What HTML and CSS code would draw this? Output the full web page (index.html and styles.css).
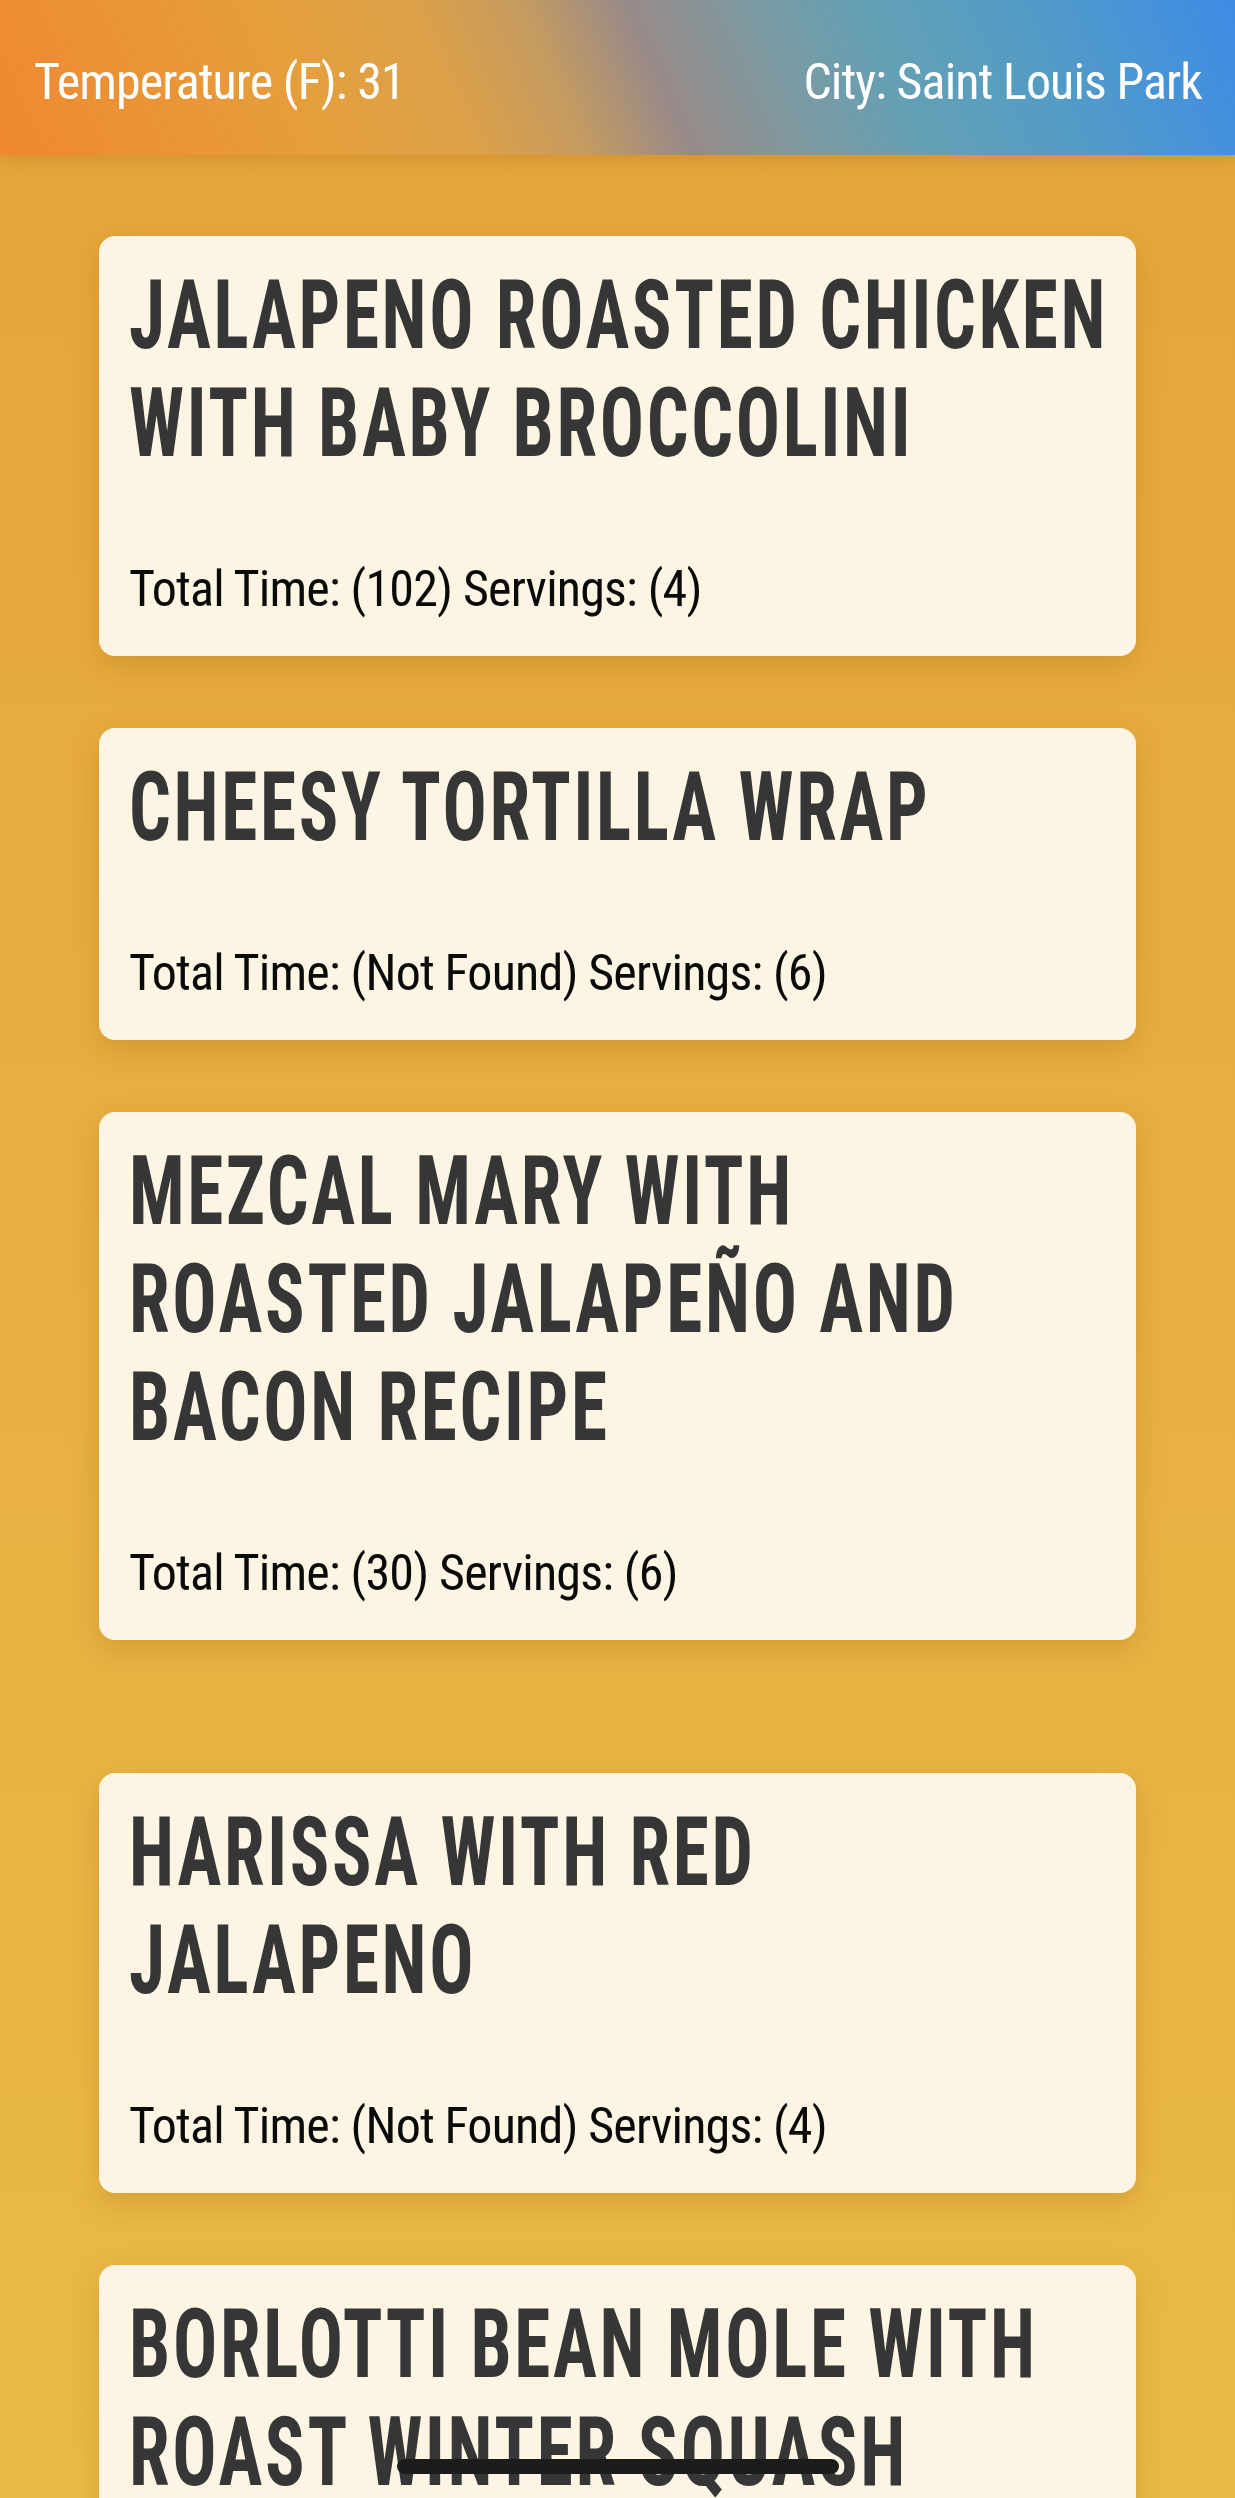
FILE: index.html
```html
<!DOCTYPE html>
<html lang="en">
<head>
<meta charset="utf-8">
<title>Recipes</title>
<link rel="stylesheet" href="styles.css">
</head>
<body>
<header class="topbar">
  <span class="topbar__item topbar__item--left">Temperature (F): 31</span>
  <span class="topbar__item topbar__item--right">City: Saint Louis Park</span>
</header>
<main class="list">
  <article class="card">
    <h2 class="card__title">Jalapeno Roasted Chicken<br>with Baby Broccolini</h2>
    <p class="card__meta">Total Time: (102) Servings: (4)</p>
  </article>
  <article class="card">
    <h2 class="card__title">Cheesy Tortilla Wrap</h2>
    <p class="card__meta">Total Time: (Not Found) Servings: (6)</p>
  </article>
  <article class="card">
    <h2 class="card__title">Mezcal Mary with<br>Roasted Jalapeño and<br>Bacon Recipe</h2>
    <p class="card__meta">Total Time: (30) Servings: (6)</p>
  </article>
  <article class="card card--spaced">
    <h2 class="card__title">Harissa with Red<br>Jalapeno</h2>
    <p class="card__meta">Total Time: (Not Found) Servings: (4)</p>
  </article>
  <article class="card">
    <h2 class="card__title">Borlotti Bean Mole with<br>Roast Winter Squash</h2>
    <p class="card__meta">Total Time: (Not Found) Servings: (4)</p>
  </article>
</main>
<div class="navbar-handle"></div>
</body>
</html>
```
FILE: styles.css
```css
* { box-sizing: border-box; }

html, body {
  margin: 0;
  padding: 0;
}

body {
  min-height: 2498px;
  background: linear-gradient(180deg, #e6a43b 0%, #e8b041 50%, #eabc45 100%);
  font-family: Roboto, "Liberation Sans", sans-serif;
  overflow: hidden;
}

.topbar {
  position: relative;
  z-index: 2;
  height: 155px;
  padding: 8px 33px 0 34px;
  display: flex;
  align-items: center;
  justify-content: space-between;
  background: linear-gradient(66deg, #ef8731 0%, #e59f3d 26%, #dba049 37%, #c59b60 45%, #998a88 53%, #7e99a0 62%, #64a0b4 71%, #539cc6 83%, #3e8be6 100%);
  box-shadow: 0 4px 18px rgba(150, 80, 0, 0.25);
  color: #ffffff;
}

.topbar__item {
  font-size: 50px;
  font-stretch: 75%;
  font-weight: 400;
  line-height: 58px;
  letter-spacing: -0.9px;
  white-space: nowrap;
}

.list {
  display: flex;
  flex-direction: column;
  gap: 72px;
  padding: 81px 99px 0;
}

.card {
  background: #fdf5e3;
  border-radius: 16px;
  padding: 25px 30px 38px;
  box-shadow: 0 10px 28px rgba(140, 80, 0, 0.22);
}

.card--spaced {
  margin-top: 61px;
}

.card__title {
  margin: 0 0 83px;
  font-family: Roboto, "Liberation Sans", sans-serif;
  font-size: 96px;
  font-weight: 700;
  font-stretch: 75%;
  line-height: 108px;
  letter-spacing: 3.5px;
  text-transform: uppercase;
  color: #363636;
  white-space: nowrap;
  transform: scaleX(0.765);
  transform-origin: left center;
}

.card__meta {
  margin: 0;
  font-size: 50px;
  font-stretch: 75%;
  font-weight: 400;
  line-height: 58px;
  letter-spacing: -0.8px;
  color: #0a0a0a;
  white-space: nowrap;
}

.navbar-handle {
  position: fixed;
  left: 50%;
  bottom: 24px;
  width: 442px;
  height: 15px;
  margin-left: -221px;
  border-radius: 8px;
  background: #1c1c1c;
  z-index: 5;
}
```
